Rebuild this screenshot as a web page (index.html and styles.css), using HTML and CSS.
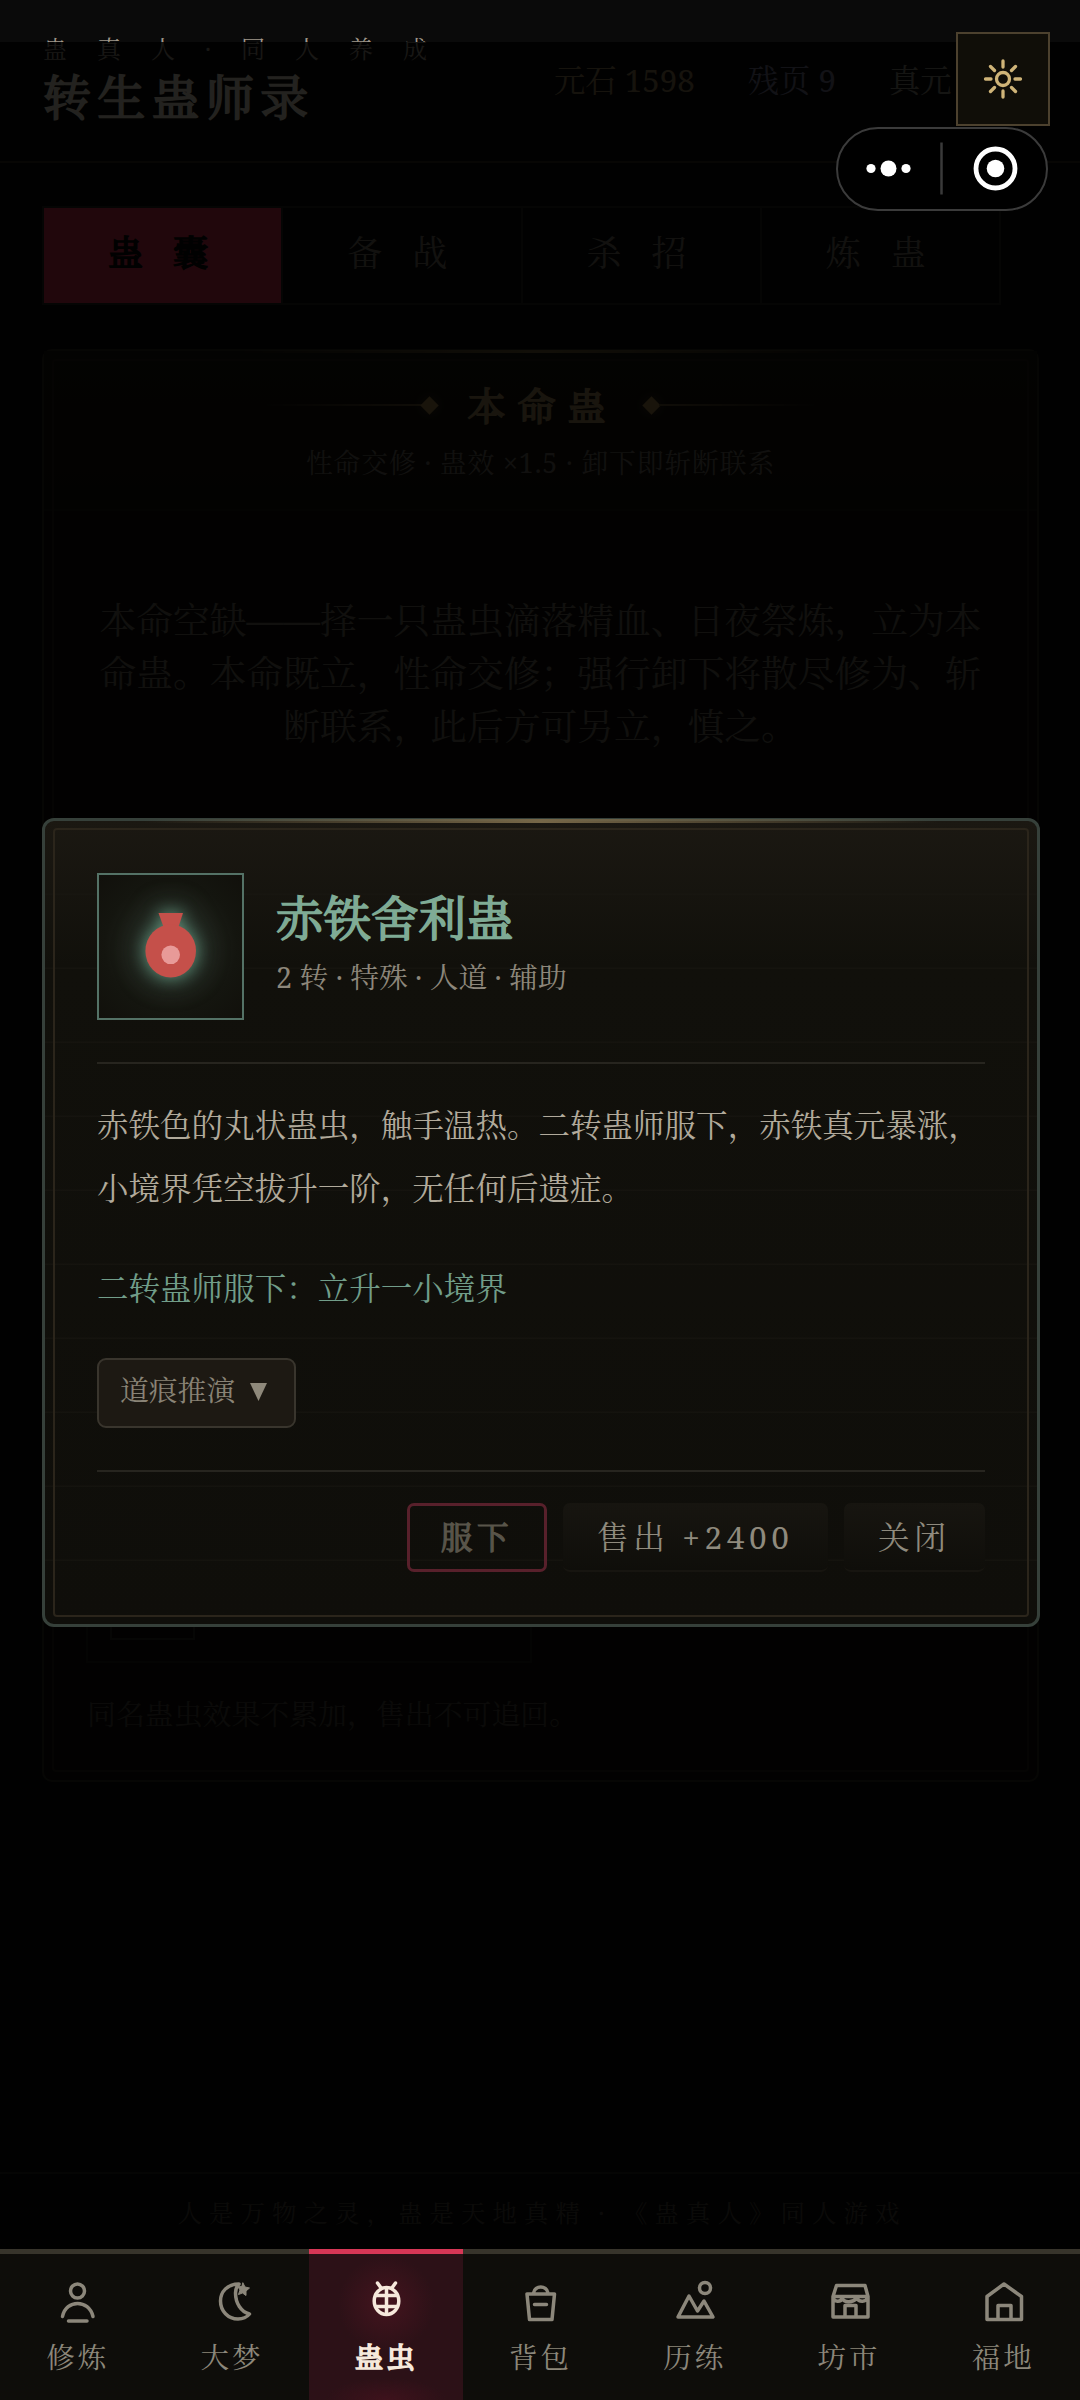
FILE: index.html
```html
<!DOCTYPE html>
<html lang="zh-CN">
<head>
<meta charset="utf-8">
<title>转生蛊师录</title>
<link rel="stylesheet" href="styles.css">
</head>
<body>
<div class="app">
  <header class="top">
    <div class="brand">
      <div class="kicker">蛊真人·同人养成</div>
      <h1 class="name">转生蛊师录</h1>
    </div>
    <div class="stats">
      <span class="stat gold">元石 1598</span>
      <span class="stat violet">残页 9</span>
      <span class="stat">真元 0/140</span>
    </div>
  </header>
  <nav class="tabs">
    <div class="tab on"><span>蛊囊</span></div>
    <div class="tab"><span>备战</span></div>
    <div class="tab"><span>杀招</span></div>
    <div class="tab"><span>炼蛊</span></div>
  </nav>
  <section class="panel">
    <div class="panel-head">
      <div class="panel-title"><i class="rule"></i><i class="gem"></i><b>本命蛊</b><i class="gem"></i><i class="rule right"></i></div>
      <div class="panel-sub">性命交修 · 蛊效 ×1.5 · 卸下即斩断联系</div>
    </div>
    <p class="empty">本命空缺——择一只蛊虫滴落精血、日夜祭炼，立为本命蛊。本命既立，性命交修；强行卸下将散尽修为、斩断联系，此后方可另立，慎之。</p>
    <div class="slot"><div class="slot-icon"></div></div>
    <p class="note">同名蛊虫效果不累加，售出不可追回。</p>
  </section>
  <footer class="foot">人是万物之灵，蛊是天地真精 · 《蛊真人》同人游戏</footer>
</div>

<div class="backdrop">
  <div class="modal">
    <div class="item">
      <div class="item-icon">
        <svg width="143" height="143" viewBox="0 0 143 143"><g class="gourd"><path d="M59.500 38H84L79.500 52H64.500Z" fill="#c5504a"/><ellipse cx="71.700" cy="76" rx="25.300" ry="26.500" fill="#c5504a"/><circle cx="71.700" cy="79.800" r="9.300" fill="#e89a98"/></g></svg>
      </div>
      <div>
        <h2 class="item-name">赤铁舍利蛊</h2>
        <div class="item-meta">2 转 · 特殊 · 人道 · 辅助</div>
      </div>
    </div>
    <p class="desc">赤铁色的丸状蛊虫，触手温热。二转蛊师服下，赤铁真元暴涨，小境界凭空拔升一阶，无任何后遗症。</p>
    <p class="effect">二转蛊师服下：立升一小境界</p>
    <div class="derive">道痕推演 <svg width="17" height="18" viewBox="0 0 17 18"><path d="M0 0H17L8.500 18Z" fill="#8f897b"/></svg></div>
    <div class="actions">
      <div class="btn eat">服下</div>
      <div class="btn">售出 +2400</div>
      <div class="btn">关闭</div>
    </div>
  </div>
</div>

<div class="sun"><svg width="44" height="44" viewBox="-22 -22 44 44"><circle r="6.500"/><path d="M0-18V-12M0 12V18M-17.500 0H-12M12 0H17.500M-12.500-12.500L-8.500-8.500M8.500 8.500L12.500 12.500M-12.500 12.500L-8.500 8.500M8.500-8.500L12.500-12.500"/></svg></div>
<div class="capsule"><svg width="208" height="80" viewBox="0 0 208 80"><g fill="#fff"><circle cx="33" cy="39.500" r="4.600"/><circle cx="50.500" cy="39.500" r="8"/><circle cx="68" cy="39.500" r="4.600"/><circle cx="157.500" cy="39.500" r="8.800"/></g><path d="M103.500 13.500V65.500" stroke="#3a3a3a" stroke-width="2.500"/><circle cx="157.500" cy="39.500" r="19.500" fill="none" stroke="#fff" stroke-width="4.800"/></svg></div>

<nav class="dock">
  <div class="dock-item"><svg viewBox="0 0 44 44"><circle cx="22.500" cy="11" r="7"/><path d="M7.500 36.500C11 19 34 19 38 36.500M13.500 41H32"/></svg><span>修炼</span></div>
  <div class="dock-item"><svg viewBox="0 0 44 44"><path d="M30 4C18 4 11.500 12 11.500 21C11.500 31 19 39 29 39C34 39 38 37 40.500 34C32 32 26.500 23 26.500 13C26.500 9 28 6 30 4Z"/><path class="star" d="M34 3L36 7L40.500 8L37 11L37 15.500L33.500 13L29.500 14.500L31 10L28.500 6L32.500 6.500Z"/></svg><span>大梦</span></div>
  <div class="dock-item on"><svg viewBox="0 0 44 44"><ellipse cx="22.500" cy="21" rx="12.300" ry="13.500"/><path d="M13.500 3L17.500 8.500M31.500 3L27.500 8.500M12 15.500H33M12.500 26.500H32.500M22.500 8V34"/></svg><span>蛊虫</span></div>
  <div class="dock-item"><svg viewBox="0 0 44 44"><path d="M9 14H36.500L34 39.500H11.500ZM15.500 13C17 5 28.500 5 30 13M16.500 24.500H28.500"/></svg><span>背包</span></div>
  <div class="dock-item"><svg viewBox="0 0 44 44"><path d="M6 37L17 16L25.500 31L32 21L41 37Z"/><circle cx="33" cy="8" r="5.500"/></svg><span>历练</span></div>
  <div class="dock-item"><svg viewBox="0 0 44 44"><path d="M9.500 5.500H38L41 16.500V37H6V16.500ZM6 16.500H41M6 17C7 22.500 14 22.500 15 18C17 22.500 25 23.500 30 18C32 22.500 39 22.500 41 17M18 37V25.500H29V37"/></svg><span>坊市</span></div>
  <div class="dock-item"><svg viewBox="0 0 44 44"><path d="M23 4L40.500 16.500V39.500H6V16.500ZM17 39V25.500H30V39"/></svg><span>福地</span></div>
</nav>
</body>
</html>
```
FILE: styles.css
```css
* { box-sizing: border-box; margin: 0; padding: 0; }
body {
  width: 1080px; height: 2400px; overflow: hidden; position: relative;
  background: #0a0a0a; color: #e8e0d0;
  font-family: "Noto Serif", "Noto Serif CJK SC", "Noto Serif SC", "Source Han Serif SC", "Noto Sans CJK SC", serif;
}
.app { height: 2249px; display: flex; flex-direction: column; }

/* headings thicken the regular face instead of switching to the bold one */
.name, .tab.on, .panel-title b, .item-name, .btn.eat, .dock-item.on span { font-weight: 400; -webkit-text-stroke: 1.7px currentColor; }

.top { height: 163px; padding: 31px 0 0 43px; display: flex; align-items: flex-start; border-bottom: 2px solid #2e2a20; }
.brand { width: 511px; flex: none; }
.kicker { font-size: 24px; line-height: 36px; letter-spacing: 30px; color: #a0988a; white-space: nowrap; }
.name { font-size: 48px; line-height: 58px; margin-top: 1px; letter-spacing: 6.300px; color: #e8e0d0; }
.stats { display: flex; gap: 53px; padding-top: 26px; white-space: nowrap; font-size: 31.300px; line-height: 46px; }
.stat { color: #908a80; }
.stat.gold { color: #96805a; }
.stat.violet { color: #7a7a96; }

.tabs { display: flex; margin: 43px 0 0 42px; width: 959px; height: 99px; border: 2px solid #26241d; }
.tab { flex: 1; display: flex; align-items: center; justify-content: center; font-size: 35px; line-height: 50px; color: #7c7668; border-right: 2px solid #26241d; }
.tab:last-child { border-right: 0; }
.tab span { letter-spacing: 30px; margin-right: -21px; padding-bottom: 5px; }
.tab.on { background: #dc3452; color: #0a0a0a; }

.panel { position: relative; margin: 44px 41px 0 42px; height: 1433px; border: 2px solid #2d2a20; border-radius: 10px; background: #0e0c09; }
.panel::before { content: ""; position: absolute; inset: 8px; border: 2px solid #241f14; border-radius: 4px; }
.panel::after { content: ""; position: absolute; left: 20%; right: 20%; top: -1px; height: 3px; background: linear-gradient(90deg, transparent, #7c693e, transparent); }
.panel-head { height: 160px; padding-top: 26px; background: linear-gradient(180deg, #1a150e, #120f0a); border-bottom: 2px solid #171612; text-align: center; }
.panel-title { display: flex; align-items: center; justify-content: center; line-height: 56px; color: #a88e5e; }
.panel-title b { font-size: 38px; letter-spacing: 12px; margin: 0 26px 0 30px; }
.rule { width: 156px; height: 2px; background: linear-gradient(90deg, transparent, #6a5734); }
.rule.right { transform: scaleX(-1); }
.gem { width: 13px; height: 13px; background: #a5844a; transform: rotate(45deg); margin: 0 1px; box-shadow: 0 0 10px #a5844a55; }
.panel-sub { margin-top: 11px; font-size: 26.800px; line-height: 38px; letter-spacing: .87px; color: #736e63; }
.empty { width: 886px; margin: 83px auto 0; font-size: 36.750px; line-height: 53px; text-align: center; color: #706b5f; }
.slot { margin: 848px 0 0 42px; width: 446px; height: 62px; border: 2px solid #1e1c15; border-top: 0; padding-left: 22px; }
.slot-icon { width: 85px; height: 39px; border: 2px solid #2c2b25; border-top: 0; }
.note { margin: 29px 0 0 43px; font-size: 28.900px; line-height: 44px; color: #4a463e; }
.foot { margin-top: auto; height: 77px; border-top: 2px solid #26241f; padding: 19px 0 0 4px; text-align: center; font-size: 24.400px; line-height: 40px; letter-spacing: 7.100px; word-spacing: -2px; color: #4c483e; white-space: nowrap; }

.backdrop { position: absolute; inset: 42px 0 0; background: rgba(0, 0, 0, .85); padding-top: 776px; }
.modal {
  position: relative; margin: 0 40px 0 42px; height: 809px; padding: 52px 52px 0; border: 3px solid #36403a; border-radius: 12px;
  background: repeating-linear-gradient(180deg, transparent 0 72px, #1a181280 73px 74px), linear-gradient(180deg, #1b1812, #11100b 18%, #0f0e0a);
}
.modal::before { content: ""; position: absolute; inset: 7px 8px; border: 2px solid #2b251b; border-radius: 4px; }
.modal::after { content: ""; position: absolute; left: 10%; right: 10%; top: -2px; height: 4px; background: linear-gradient(90deg, transparent, #766748, transparent); }
.item { display: flex; gap: 32px; height: 191px; border-bottom: 2px solid #27251f; }
.item-icon { width: 147px; height: 147px; flex: none; border: 2px solid #547266; background: radial-gradient(circle, #2a3029, #14150f 65%, #11100b); }
.item-icon svg { display: block; overflow: visible; }
.gourd { filter: drop-shadow(0 0 8px #5f8f78) drop-shadow(0 0 12px #34483e); }
.item-name { font-size: 47.500px; line-height: 64px; margin-top: 13px; color: #7fab95; }
.item-meta { font-size: 28.700px; line-height: 40px; margin-top: 7px; color: #8d877b; }
.desc { margin-top: 29px; width: 888px; font-size: 31.540px; line-height: 63.400px; color: #b1aa9b; }
.effect { margin-top: 45px; font-size: 31.540px; line-height: 46px; color: #719d89; }
.derive { margin-top: 47px; width: 199px; height: 70px; padding: 9px 0 0 21px; border: 2px solid #39352d; border-radius: 9px; background: #1d1913; color: #898376; font-size: 28.800px; line-height: 42px; white-space: nowrap; }
.derive svg { margin-left: 7px; }
.actions { margin-top: 42px; padding-top: 31px; border-top: 2px solid #27251f; display: flex; justify-content: flex-end; gap: 16px; }
.btn { height: 69px; padding: 11px 34.500px 0 34px; border-radius: 7px; font-size: 31.600px; line-height: 46px; letter-spacing: 4.600px; color: #8f8a7d; white-space: nowrap; background: linear-gradient(180deg, #171510, #0f0e0a); border-bottom: 2px solid #171510; }
.btn.eat { border: 3px solid #58202b; padding: 8px 31px 0 31px; color: #59554a; background: none; -webkit-text-stroke-width: 1.2px; }

.sun { position: absolute; left: 956px; top: 32px; width: 94px; height: 94px; border: 2px solid #4c412e; background: #100e08; display: flex; align-items: center; justify-content: center; }
.sun svg { fill: none; stroke: #cfb478; stroke-width: 3.300; stroke-linecap: round; }
.capsule { position: absolute; left: 836px; top: 127px; width: 212px; height: 84px; border: 2px solid #3b3b3b; border-radius: 42px; background: #000; }
.capsule svg { display: block; }

.dock { position: absolute; left: 0; right: 0; bottom: 0; height: 151px; display: flex; background: #0e0d0a; }
.dock-item { flex: 1; border-top: 5px solid #37342b; display: flex; flex-direction: column; align-items: center; padding-top: 26px; color: #8c877b; font-size: 28.500px; line-height: 42px; letter-spacing: 3px; }
.dock-item svg { width: 44px; height: 44px; flex: none; fill: none; stroke: currentColor; stroke-width: 3.500; stroke-linecap: round; stroke-linejoin: round; }
.dock-item .star { fill: currentColor; stroke-width: 1; }
.dock-item span { margin: 12px 0 0 1px; }
.dock-item.on { border-top-color: #d63756; color: #f6e9dc; background: radial-gradient(ellipse 60px 22px at 50% 100%, #3e121c, transparent), radial-gradient(circle 48px at 50% 34%, #44141e, #2c1117); }
```
